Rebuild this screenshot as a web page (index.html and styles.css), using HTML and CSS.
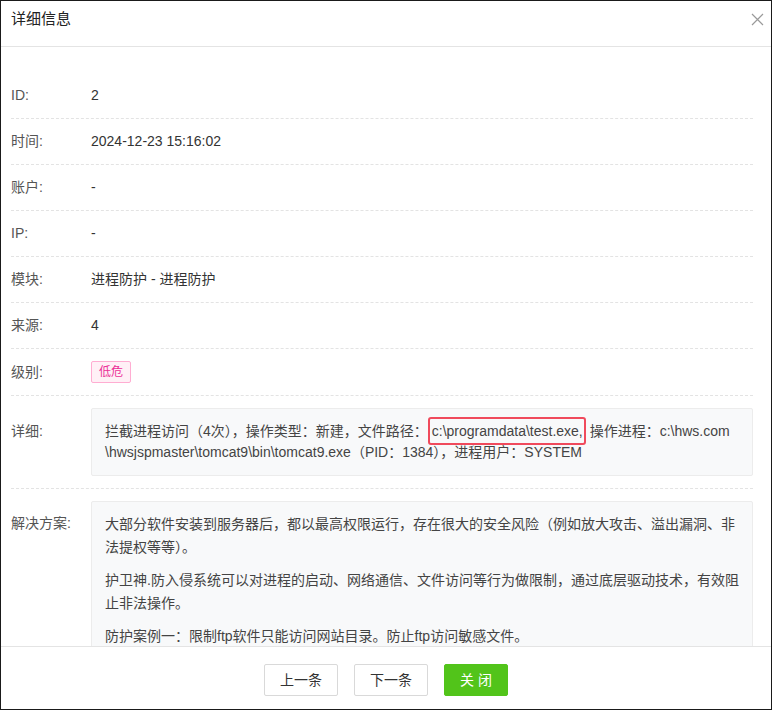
FILE: index.html
```html
<!DOCTYPE html>
<html lang="zh-CN">
<head>
<meta charset="utf-8">
<title>详细信息</title>
<link rel="stylesheet" href="styles.css">
</head>
<body>
<div class="dialog">
  <div class="dialog-header">
    <span class="title">详细信息</span>
    <span class="close" aria-label="关闭">
      <svg width="13" height="13" viewBox="0 0 13 13"><path d="M1 1 L12 12 M12 1 L1 12" stroke="#9a9a9a" stroke-width="1.2" fill="none"/></svg>
    </span>
  </div>
  <div class="dialog-body">
    <div class="row"><div class="label">ID:</div><div class="value">2</div></div>
    <div class="row"><div class="label">时间:</div><div class="value">2024-12-23 15:16:02</div></div>
    <div class="row"><div class="label">账户:</div><div class="value">-</div></div>
    <div class="row"><div class="label">IP:</div><div class="value">-</div></div>
    <div class="row"><div class="label">模块:</div><div class="value">进程防护 - 进程防护</div></div>
    <div class="row"><div class="label">来源:</div><div class="value">4</div></div>
    <div class="row"><div class="label label-tag">级别:</div><div class="value"><span class="tag">低危</span></div></div>
    <div class="row"><div class="label label-box">详细:</div>
      <div class="box detail">
        <p>拦截进程访问（4次），操作类型：新建，文件路径：<span class="hl">c:\programdata\test.exe,</span> 操作进程：c:\hws.com<br>\hwsjspmaster\tomcat9\bin\tomcat9.exe（PID：1384），进程用户：SYSTEM</p>
      </div>
    </div>
    <div class="row"><div class="label label-box2">解决方案:</div>
      <div class="box solution">
        <p>大部分软件安装到服务器后，都以最高权限运行，存在很大的安全风险（例如放大攻击、溢出漏洞、非法提权等等）。</p>
        <p>护卫神.防入侵系统可以对进程的启动、网络通信、文件访问等行为做限制，通过底层驱动技术，有效阻止非法操作。</p>
        <p>防护案例一：限制ftp软件只能访问网站目录。防止ftp访问敏感文件。</p>
      </div>
    </div>
  </div>
  <div class="dialog-footer">
    <button class="btn">上一条</button>
    <button class="btn">下一条</button>
    <button class="btn btn-primary">关 闭</button>
  </div>
</div>
</body>
</html>
```

FILE: styles.css
```css
* { box-sizing: border-box; }
html, body { margin: 0; padding: 0; background: #fff; }
body {
  font-family: "Liberation Sans", "Noto Sans CJK SC", sans-serif;
  font-size: 14px;
  color: #333;
}
.dialog {
  width: 772px;
  height: 710px;
  border: 1px solid #1a1a1a;
  display: flex;
  flex-direction: column;
  background: #fff;
}
.dialog-header {
  flex: none;
  height: 46px;
  border-bottom: 1px solid #e4e4e4;
  display: flex;
  align-items: flex-start;
  padding: 7px 7px 0 10px;
}
.title {
  font-size: 15px;
  line-height: 22px;
  color: #222;
}
.close {
  margin-left: auto;
  margin-top: 5px;
  width: 13px;
  height: 13px;
  display: block;
}
.close svg { display: block; }
.dialog-body {
  flex: 1;
  overflow: hidden;
  padding: 26px 18px 0 10px;
}
.row {
  display: flex;
  align-items: flex-start;
  padding: 12px 0;
  border-bottom: 1px dashed #e3e3e3;
  line-height: 21px;
}
.label {
  flex: none;
  width: 80px;
  color: #555;
}
.label-tag { margin-top: 0.5px; }
.label-box { margin-top: 13px; }
.label-box2 { margin-top: 12px; }
.value { flex: 1; color: #333; }
.tag {
  display: inline-block;
  font-size: 12px;
  line-height: 20px;
  height: 22px;
  padding: 0 7px;
  border: 1px solid #ffadd2;
  background: #fff0f6;
  color: #eb2f96;
  border-radius: 2px;
  vertical-align: top;
}
.box {
  flex: 1;
  background: #f8f9fa;
  border: 1px solid #ececec;
  border-radius: 2px;
  color: #444;
}
.box p { margin: 0; }
.detail {
  padding: 12px 8px 12px 13px;
  line-height: 21px;
  white-space: nowrap;
}
.hl {
  border: 2px solid #f04a5c;
  border-radius: 3px;
  padding: 4px 1px 4px 2px;
}
.solution {
  padding: 11px 8px 11px 13px;
  line-height: 23px;
}
.solution p { margin-bottom: 10px; }
.dialog-footer {
  flex: none;
  height: 63px;
  border-top: 1px solid #e4e4e4;
  display: flex;
  justify-content: center;
  align-items: flex-start;
  gap: 16px;
  padding-top: 17px;
}
.btn {
  height: 32px;
  padding: 0 15px;
  font-family: inherit;
  font-size: 14px;
  color: #333;
  background: #fff;
  border: 1px solid #d9d9d9;
  border-radius: 2px;
  line-height: 30px;
  margin: 0;
}
.btn-primary {
  background: #52c41a;
  border-color: #52c41a;
  color: #fff;
}
```
